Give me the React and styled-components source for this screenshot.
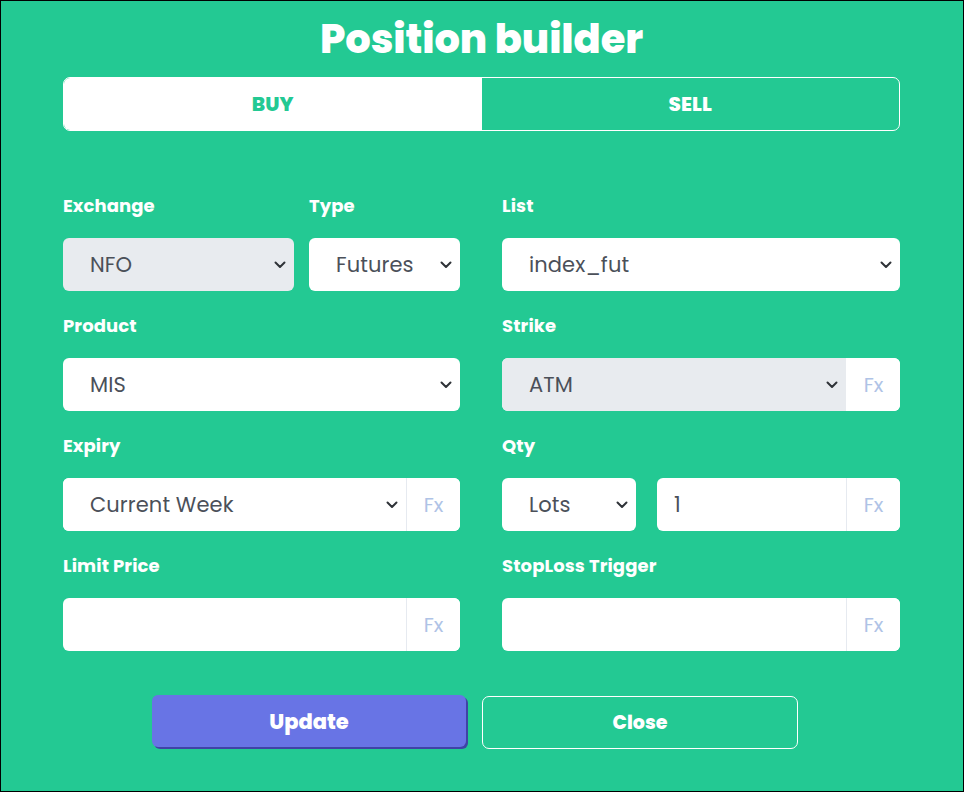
import React from "react";
import styled, { createGlobalStyle } from "styled-components";

const GREEN = "#23c993";
const FONT = `"Poppins", "Inter", "Noto Sans", sans-serif`;

const Global = createGlobalStyle`
  html, body { margin: 0; padding: 0; }
  body { font-family: ${FONT}; }
  * { box-sizing: border-box; }
`;

const Frame = styled.div`
  width: 964px;
  height: 792px;
  border: 1px solid #000;
  background: ${GREEN};
  padding: 0 63px 0 62px;
  display: flex;
  flex-direction: column;
`;

const Title = styled.h1`
  margin: 13px 0 0;
  text-align: center;
  color: #fff;
  font-size: 40px;
  font-weight: 800;
  line-height: 50px;
  letter-spacing: -0.1px;
`;

const Tabs = styled.div`
  margin-top: 13px;
  display: flex;
  height: 54px;
  border: 1px solid #fff;
  border-radius: 7px;
  overflow: hidden;
`;

const Tab = styled.div`
  flex: 1;
  display: flex;
  align-items: center;
  justify-content: center;
  font-size: 20px;
  font-weight: 800;
  letter-spacing: 0.1px;
  background: ${(p) => (p.$active ? "#fff" : "transparent")};
  color: ${(p) => (p.$active ? GREEN : "#fff")};
`;

const Form = styled.div`
  margin-top: 63px;
  display: grid;
  grid-template-columns: 397px 398px;
  column-gap: 42px;
  row-gap: 23px;
`;

const Pair = styled.div`
  display: flex;
  gap: ${(p) => p.$gap}px;
`;

const Field = styled.div`
  display: flex;
  flex-direction: column;
  gap: 20px;
  flex: ${(p) => (p.$w ? `0 0 ${p.$w}px` : "1")};
  min-width: 0;
`;

const Label = styled.div`
  color: #fff;
  font-size: 18px;
  font-weight: 700;
  line-height: 24px;
  letter-spacing: 0.1px;
`;

const Control = styled.div`
  height: 53px;
  flex-shrink: 0;
  border-radius: 6px;
  background: #fff;
  display: flex;
  overflow: hidden;
  ${(p) => (p.$w ? `flex: 0 0 ${p.$w}px;` : "")}
  ${(p) => (p.$grow ? "flex: 1 1 0;" : "")}
`;

const SelectArea = styled.div`
  flex: 1;
  display: flex;
  align-items: center;
  padding: 0 8px 0 27px;
  background: ${(p) => (p.$muted ? "#e8ebef" : "#fff")};
  color: #4b5059;
  font-size: 21px;
  font-weight: 400;
  letter-spacing: 0.1px;
`;

const Value = styled.span`
  flex: 1;
  white-space: nowrap;
`;

const TextArea = styled.div`
  flex: 1;
  display: flex;
  align-items: center;
  padding: 0 17px;
  color: #4b5059;
  font-size: 21px;
`;

const Addon = styled.div`
  flex: 0 0 54px;
  display: flex;
  align-items: center;
  justify-content: center;
  border-left: 1px solid ${(p) => (p.$noDivider ? "transparent" : "#e6eaf0")};
  color: #afc3e6;
  font-size: 20px;
  background: #fff;
`;

const Buttons = styled.div`
  margin-top: 44px;
  padding-left: 89px;
  display: flex;
  gap: 16px;
  align-items: flex-start;
`;

const UpdateButton = styled.div`
  width: 314px;
  height: 52px;
  border-radius: 6px;
  background: #6874e5;
  box-shadow: 2px 2px 0 #3f44a6;
  color: #fff;
  font-size: 21px;
  font-weight: 800;
  display: flex;
  align-items: center;
  justify-content: center;
`;

const CloseButton = styled.div`
  margin-top: 1px;
  width: 316px;
  height: 53px;
  border-radius: 7px;
  border: 1px solid #fff;
  color: #fff;
  font-size: 19px;
  font-weight: 800;
  display: flex;
  align-items: center;
  justify-content: center;
`;

const Chevron = () => (
  <svg width="12" height="8" viewBox="0 0 12 8" fill="none">
    <path d="M1.5 1.5 L6 6 L10.5 1.5" stroke="#2f3338" strokeWidth="2" strokeLinecap="round" strokeLinejoin="round" />
  </svg>
);

const Select = ({ value, muted }) => (
  <SelectArea $muted={muted}>
    <Value>{value}</Value>
    <Chevron />
  </SelectArea>
);

export default function App() {
  return (
    <>
      <Global />
      <Frame>
        <Title>Position builder</Title>
        <Tabs>
          <Tab $active>BUY</Tab>
          <Tab>SELL</Tab>
        </Tabs>
        <Form>
          <Pair $gap={15}>
            <Field>
              <Label>Exchange</Label>
              <Control>
                <Select value="NFO" muted />
              </Control>
            </Field>
            <Field $w={151}>
              <Label>Type</Label>
              <Control>
                <Select value="Futures" />
              </Control>
            </Field>
          </Pair>
          <Field>
            <Label>List</Label>
            <Control>
              <Select value="index_fut" />
            </Control>
          </Field>

          <Field>
            <Label>Product</Label>
            <Control>
              <Select value="MIS" />
            </Control>
          </Field>
          <Field>
            <Label>Strike</Label>
            <Control>
              <Select value="ATM" muted />
              <Addon $noDivider>Fx</Addon>
            </Control>
          </Field>

          <Field>
            <Label>Expiry</Label>
            <Control>
              <Select value="Current Week" />
              <Addon>Fx</Addon>
            </Control>
          </Field>
          <Field>
            <Label>Qty</Label>
            <Pair $gap={21}>
              <Control $w={134}>
                <Select value="Lots" />
              </Control>
              <Control $grow>
                <TextArea>1</TextArea>
                <Addon>Fx</Addon>
              </Control>
            </Pair>
          </Field>

          <Field>
            <Label>Limit Price</Label>
            <Control>
              <TextArea />
              <Addon>Fx</Addon>
            </Control>
          </Field>
          <Field>
            <Label>StopLoss Trigger</Label>
            <Control>
              <TextArea />
              <Addon>Fx</Addon>
            </Control>
          </Field>
        </Form>
        <Buttons>
          <UpdateButton>Update</UpdateButton>
          <CloseButton>Close</CloseButton>
        </Buttons>
      </Frame>
    </>
  );
}
